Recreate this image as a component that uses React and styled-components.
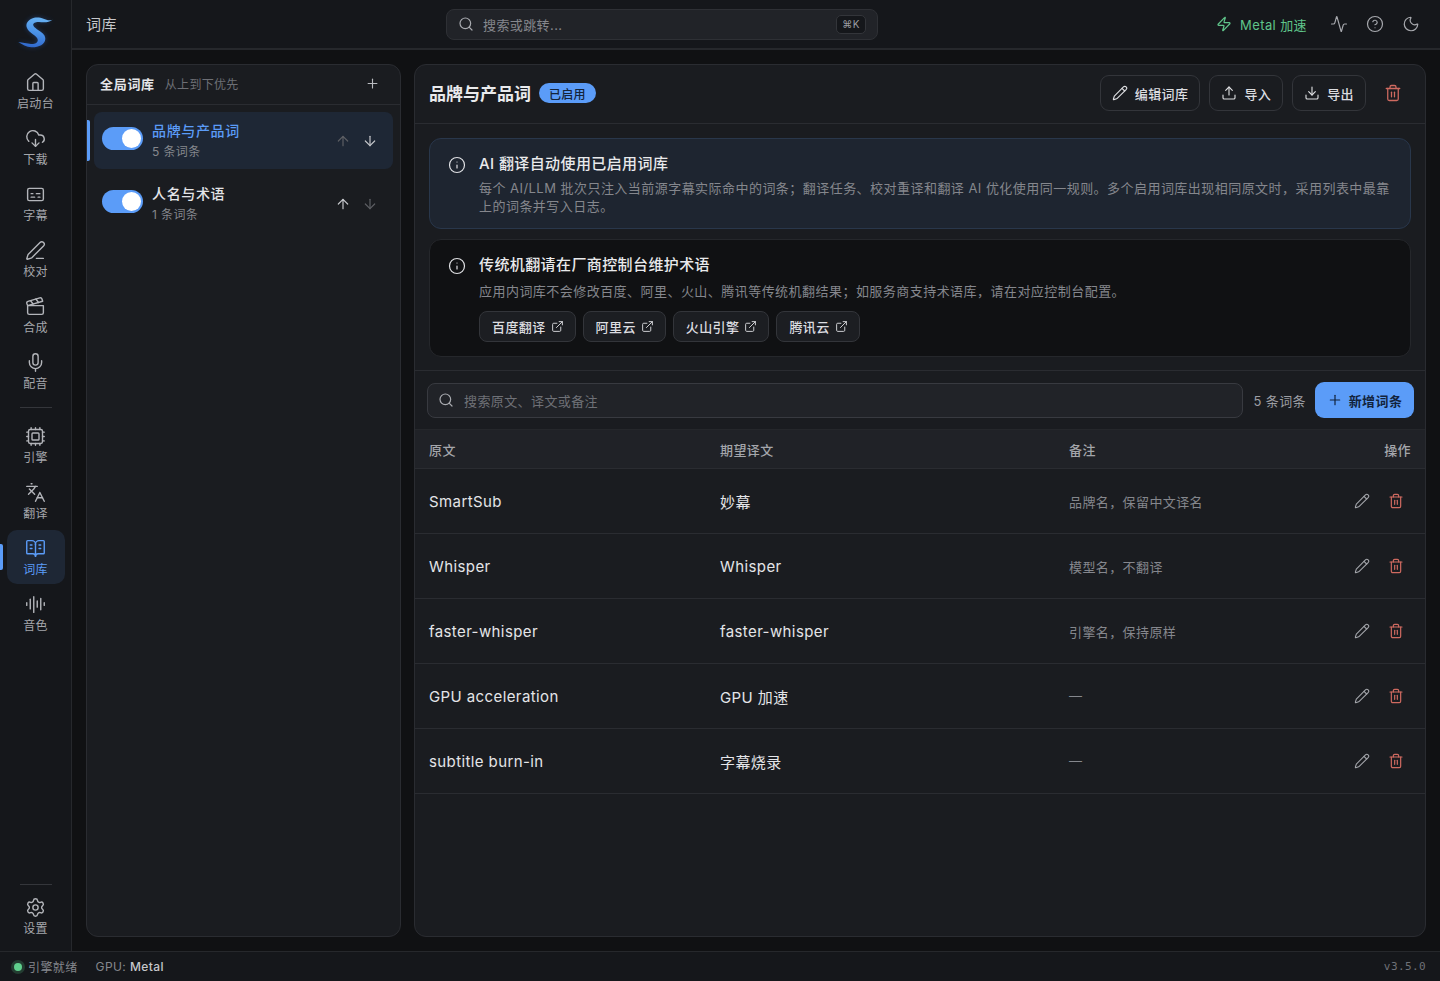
import React from "react";
import styled, { createGlobalStyle } from "styled-components";
import {
  House, CloudDownload, Captions, PenLine, Clapperboard, Mic, Cpu, Languages,
  BookOpenText, AudioLines, Settings, Zap, Activity, CircleHelp, Moon, Search,
  Plus, ArrowUp, ArrowDown, Pencil, Upload, Download, Trash2, Info, ExternalLink,
} from "lucide-react";

const NAV_TOP = [
  { label: "启动台", Icon: House },
  { label: "下载", Icon: CloudDownload },
  { label: "字幕", Icon: Captions },
  { label: "校对", Icon: PenLine },
  { label: "合成", Icon: Clapperboard },
  { label: "配音", Icon: Mic },
];
const NAV_MID = [
  { label: "引擎", Icon: Cpu },
  { label: "翻译", Icon: Languages },
  { label: "词库", Icon: BookOpenText, active: true },
  { label: "音色", Icon: AudioLines },
];
const LIBS = [
  { name: "品牌与产品词", count: "5 条词条", active: true, upOff: true },
  { name: "人名与术语", count: "1 条词条", downOff: true },
];
const TERMS = [
  ["SmartSub", "妙幕", "品牌名，保留中文译名"],
  ["Whisper", "Whisper", "模型名，不翻译"],
  ["faster-whisper", "faster-whisper", "引擎名，保持原样"],
  ["GPU acceleration", "GPU 加速", "—"],
  ["subtitle burn-in", "字幕烧录", "—"],
];
const VENDORS = ["百度翻译", "阿里云", "火山引擎", "腾讯云"];

const GlobalStyle = createGlobalStyle`
  html, body { margin: 0; padding: 0; background: #101113; }
  body {
    font-family: Inter, "Noto Sans CJK SC", sans-serif;
    letter-spacing: 0.4px;
    color: #e4e5e8;
    -webkit-font-smoothing: antialiased;
  }
  button { letter-spacing: inherit; }
  * { box-sizing: border-box; }
`;

const Shell = styled.div`
  width: 1440px;
  height: 981px;
  display: flex;
  flex-direction: column;
  overflow: hidden;
`;
const Body = styled.div`
  flex: 1;
  display: flex;
  min-height: 0;
`;

const Sidebar = styled.aside`
  width: 72px;
  flex: none;
  display: flex;
  flex-direction: column;
  align-items: center;
  background: #15171b;
  border-right: 1px solid #26282c;
`;
const LogoWrap = styled.div`
  height: 64px;
  width: 100%;
  flex: none;
  display: flex;
  align-items: flex-start;
  justify-content: center;
  padding-top: 15px;
`;
const NavGroup = styled.div`
  display: flex;
  flex-direction: column;
  gap: 2px;
`;
const NavItem = styled.div`
  position: relative;
  width: 58px;
  height: 54px;
  display: flex;
  flex-direction: column;
  align-items: center;
  justify-content: flex-start;
  padding-top: 8px;
  gap: 2px;
  border-radius: 10px;
  font-size: 12px;
  letter-spacing: 0.3px;
  line-height: 17px;
  color: ${(p) => (p.$active ? "#5b9cf8" : "#a4a6ab")};
  background: ${(p) => (p.$active ? "#1e2735" : "transparent")};

  svg { color: ${(p) => (p.$active ? "#5b9cf8" : "#b3b5ba")}; }
`;
const NavMarker = styled.span`
  position: absolute;
  left: -7px;
  top: 14px;
  width: 3px;
  height: 26px;
  border-radius: 0 2px 2px 0;
  background: #5b9cf8;
`;
const NavDivider = styled.div`
  width: 32px;
  height: 1px;
  margin: 9px 0 ${(p) => (p.$tight ? "4px" : "10px")};
  background: #34363b;
`;
const SidebarFoot = styled.div`
  margin-top: auto;
  padding-bottom: 8px;
  display: flex;
  flex-direction: column;
  align-items: center;
`;

const Main = styled.div`
  flex: 1;
  min-width: 0;
  display: flex;
  flex-direction: column;
`;
const Topbar = styled.header`
  height: 50px;
  flex: none;
  display: flex;
  align-items: center;
  padding: 0 20px 0 14px;
  background: #15171b;
  border-bottom: 2px solid #26282c;
`;
const PageTitle = styled.div`
  width: 360px;
  margin-top: -2px;
  font-size: 15px;
  color: #c6c7cb;
`;
const GlobalSearch = styled.div`
  width: 432px;
  height: 31px;
  display: flex;
  align-items: center;
  gap: 9px;
  padding: 0 11px;
  border-radius: 8px;
  border: 1px solid #2e3035;
  background: #212328;
  font-size: 13px;
  color: #85878d;
  svg { color: #a9abb0; }
`;
const Kbd = styled.span`
  margin-left: auto;
  width: 30px;
  height: 19px;
  display: flex;
  align-items: center;
  justify-content: center;
  border-radius: 5px;
  border: 1px solid #33353a;
  background: #15171b;
  font-size: 10px;
  color: #9b9da2;
`;
const TopActions = styled.div`
  margin-left: auto;
  display: flex;
  align-items: center;
  color: #a7a9ae;
`;
const MetalTag = styled.div`
  display: flex;
  align-items: center;
  gap: 8px;
  margin-right: 23px;
  font-size: 13px;
  color: #5fc48a;
`;
const TopIcon = styled.span`
  width: 18px;
  height: 18px;
  display: flex;
  margin-left: ${(p) => (p.$first ? "0" : "18px")};
`;

const Content = styled.main`
  flex: 1;
  min-height: 0;
  display: flex;
  gap: 13px;
  padding: 14px;
`;
const Panel = styled.section`
  display: flex;
  flex-direction: column;
  border: 1px solid #2a2c31;
  border-radius: 12px;
  background: #1a1c20;
  overflow: hidden;
`;
const LibraryPanel = styled(Panel)`
  width: 315px;
  flex: none;
`;
const DetailPanel = styled(Panel)`
  flex: 1;
  min-width: 0;
`;

const LibHead = styled.div`
  height: 40px;
  flex: none;
  display: flex;
  align-items: center;
  gap: 10px;
  padding: 0 20px 2px 13px;
  border-bottom: 1px solid #2a2c31;
`;
const LibHeadTitle = styled.span`
  font-size: 13px;
  letter-spacing: 0.7px;
  font-weight: 600;
  color: #e4e5e8;
`;
const LibHeadNote = styled.span`
  font-size: 12px;
  letter-spacing: 0.3px;
  color: #6d6f75;
`;
const LibHeadAdd = styled.span`
  margin-left: auto;
  display: flex;
  color: #b9bbc0;
`;
const LibList = styled.div`
  display: flex;
  flex-direction: column;
  gap: 6px;
  padding: 7px;
`;
const LibRow = styled.div`
  position: relative;
  height: 57px;
  display: flex;
  align-items: center;
  padding: 0 15px 0 8px;
  border-radius: 8px;
  background: ${(p) => (p.$active ? "#1e2735" : "transparent")};
`;
const LibMarker = styled.span`
  position: absolute;
  left: -7px;
  top: 8px;
  width: 3px;
  height: 41px;
  border-radius: 0 2px 2px 0;
  background: #5b9cf8;
`;
const Toggle = styled.span`
  position: relative;
  width: 41px;
  height: 23px;
  flex: none;
  border-radius: 12px;
  background: #5b9cf8;
  margin-top: -4px;

  &::after {
    content: "";
    position: absolute;
    right: 2px;
    top: 2px;
    width: 19px;
    height: 19px;
    border-radius: 50%;
    background: #fff;
  }
`;
const LibText = styled.div`
  margin-left: 9px;
  flex: 1;
  min-width: 0;
`;
const LibName = styled.div`
  font-size: 14px;
  letter-spacing: 0.65px;
  line-height: 20px;
  font-weight: 500;
  color: ${(p) => (p.$active ? "#5b9cf8" : "#e4e5e8")};
`;
const LibCount = styled.div`
  font-size: 12px;
  line-height: 18px;
  margin-top: 2px;
  color: #85878d;
`;
const Arrow = styled.span`
  display: flex;
  margin-left: 11px;
  color: ${(p) => (p.$off ? "#5c5e63" : "#c3c5c9")};
`;

const DetailHead = styled.div`
  height: 59px;
  flex: none;
  display: flex;
  align-items: center;
  padding: 0 23px 2px 14px;
  border-bottom: 1px solid #2a2c31;
`;
const DetailTitle = styled.h1`
  margin: -1px 0 0;
  font-size: 17px;
  letter-spacing: 0;
  font-weight: 600;
  color: #e9eaec;
`;
const EnabledBadge = styled.span`
  margin-left: 8px;
  height: 20px;
  padding: 0 10px;
  display: flex;
  align-items: center;
  border-radius: 10px;
  background: #5b9cf8;
  font-size: 12px;
  letter-spacing: 0.3px;
  font-weight: 500;
  color: #14233a;
`;
const HeadActions = styled.div`
  margin-left: auto;
  display: flex;
  align-items: center;
  gap: 9px;
`;
const OutlineButton = styled.button`
  height: 36px;
  padding: 0 11px;
  display: flex;
  align-items: center;
  gap: 7px;
  border-radius: 9px;
  border: 1px solid #33353a;
  background: #1a1c20;
  color: #dcdde0;
  font: 500 13px Inter, "Noto Sans CJK SC", sans-serif;
`;
const DangerIcon = styled.span`
  display: flex;
  color: #cf6a60;
  margin-left: ${(p) => p.$gap || 0}px;
`;

const Notices = styled.div`
  flex: none;
  display: flex;
  flex-direction: column;
  gap: 10px;
  padding: 14px 14px 13px;
  border-bottom: 1px solid #2a2c31;
`;
const Notice = styled.div`
  display: flex;
  gap: 13px;
  padding: 14px 18px ${(p) => (p.$tone === "blue" ? "13px" : "14px")} 18px;
  border-radius: 12px;
  border: 1px solid ${(p) => (p.$tone === "blue" ? "#29374b" : "#25272b")};
  background: ${(p) => (p.$tone === "blue" ? "#1e2530" : "#101113")};
  svg { flex: none; }
`;
const NoticeIcon = styled.span`
  display: flex;
  margin-top: 3px;
  color: #dfe0e3;
`;
const NoticeBody = styled.div`
  flex: 1;
  min-width: 0;
`;
const NoticeTitle = styled.div`
  font-size: 15px;
  line-height: 22px;
  font-weight: 500;
  color: #e9eaec;
`;
const NoticeText = styled.div`
  margin-top: ${(p) => (p.$loose ? "6px" : "4px")};
  font-size: 13px;
  line-height: 18px;
  letter-spacing: 0.46px;
  color: #85878d;
`;
const VendorRow = styled.div`
  display: flex;
  gap: 7px;
  margin-top: 11px;
`;
const VendorButton = styled.button`
  height: 31px;
  padding: 0 11px 0 12px;
  display: flex;
  align-items: center;
  gap: 5px;
  border-radius: 8px;
  border: 1px solid #33353a;
  background: #1c1e22;
  color: #dcdde0;
  font: 500 13px Inter, "Noto Sans CJK SC", sans-serif;
`;

const TermBar = styled.div`
  flex: none;
  height: 58px;
  display: flex;
  align-items: center;
  padding: 0 11px 0 12px;
`;
const TermSearch = styled.div`
  flex: 1;
  height: 35px;
  display: flex;
  align-items: center;
  gap: 10px;
  padding: 0 10px;
  border-radius: 8px;
  border: 1px solid #383a40;
  background: #212328;
  font-size: 13px;
  color: #6f7177;
  svg { color: #a9abb0; }
`;
const TermCount = styled.span`
  margin: 0 9px 0 10px;
  font-size: 13px;
  color: #9c9ea3;
`;
const PrimaryButton = styled.button`
  width: 99px;
  height: 36px;
  display: flex;
  align-items: center;
  justify-content: center;
  gap: 6px;
  border: 0;
  border-radius: 9px;
  background: #5b9cf8;
  color: #12233c;
  font: 600 13px Inter, "Noto Sans CJK SC", sans-serif;
`;

const row = `
  display: grid;
  grid-template-columns: 291px 349px 1fr 84px;
  align-items: center;
  padding-left: 14px;
`;
const TableHead = styled.div`
  ${row}
  flex: none;
  height: 40px;
  background: #202227;
  border-top: 1px solid #25272b;
  border-bottom: 1px solid #2a2c31;
  font-size: 13px;
  font-weight: 500;
  color: #a4a6ab;
`;
const HeadActionsCell = styled.div`
  text-align: right;
  padding-right: 14px;
`;
const TermRow = styled.div`
  ${row}
  flex: none;
  height: 65px;
  border-bottom: 1px solid #2a2c31;
`;
const Source = styled.div`
  font-size: 15px;
  color: #e4e5e8;
`;
const Note = styled.div`
  font-size: 13px;
  color: #85878d;
`;
const RowActions = styled.div`
  display: flex;
  justify-content: flex-end;
  align-items: center;
  gap: 18px;
  padding-right: 21px;
`;
const EditIcon = styled.span`
  display: flex;
  color: #a4a6ab;
`;

const StatusBar = styled.footer`
  height: 30px;
  flex: none;
  display: flex;
  align-items: center;
  padding: 0 14px;
  background: #15171b;
  border-top: 1px solid #26282c;
  font-size: 12px;
  color: #85878d;
`;
const Dot = styled.span`
  width: 8px;
  height: 8px;
  margin-right: 6px;
  border-radius: 50%;
  background: #5fd08d;
  box-shadow: 0 0 0 3px rgba(95, 208, 141, 0.2);
`;
const Gpu = styled.span`
  margin-left: 18px;
  strong { font-weight: 500; color: #c6c7cb; }
`;
const Version = styled.span`
  margin-left: auto;
  font-family: "DejaVu Sans Mono", "Liberation Mono", monospace;
  font-size: 11px;
  color: #6f7177;
`;

const LOGO_PATH =
  "M34.5 4.8C31 6 28.5 5 25.5 3.8C22 2.4 17 2 13.5 3.8C9.5 5.8 7.8 9 8.7 12.2C9.5 15 12 17.2 14.5 19C17.5 21.2 19.8 22.8 19.8 25C19.8 27.8 16.8 29.3 13 29C9 28.7 4.5 27.3 .3 27C4 29.5 8.5 32.2 13.5 32.3C20.5 32.5 27 29.5 27.3 24C27.5 20.5 25 18.5 22.3 16.5C19.5 14.5 15.5 12.3 15.2 10C15 7.8 18 6.8 21 7C25.5 7.3 30.5 8 34.5 4.8Z";

const Logo = () => (
  <svg width="36" height="34" viewBox="0 0 36 34" aria-label="SmartSub" overflow="visible">
    <defs>
      <linearGradient id="logo" x1="0.6" y1="0" x2="0.4" y2="1">
        <stop offset="0" stopColor="#68b2f2" />
        <stop offset="0.5" stopColor="#4a92e8" />
        <stop offset="1" stopColor="#3068cc" />
      </linearGradient>
      <filter id="glow" x="-40%" y="-40%" width="180%" height="180%">
        <feGaussianBlur stdDeviation="2.6" />
      </filter>
    </defs>
    <path filter="url(#glow)" opacity="0.4" fill="#2c66c8" d={LOGO_PATH} />
    <path fill="url(#logo)" d={LOGO_PATH} />
  </svg>
);

const Nav = ({ label, Icon, active }) => (
  <NavItem $active={active}>
    {active && <NavMarker />}
    <Icon size={21} strokeWidth={1.6} />
    <span>{label}</span>
  </NavItem>
);

export default function App() {
  return (
    <Shell>
      <GlobalStyle />
      <Body>
        <Sidebar>
          <LogoWrap><Logo /></LogoWrap>
          <NavGroup>{NAV_TOP.map((n) => <Nav key={n.label} {...n} />)}</NavGroup>
          <NavDivider />
          <NavGroup>{NAV_MID.map((n) => <Nav key={n.label} {...n} />)}</NavGroup>
          <SidebarFoot>
            <NavDivider $tight />
            <Nav label="设置" Icon={Settings} />
          </SidebarFoot>
        </Sidebar>
        <Main>
          <Topbar>
            <PageTitle>词库</PageTitle>
            <GlobalSearch>
              <Search size={16} strokeWidth={1.8} />
              <span>搜索或跳转...</span>
              <Kbd>⌘K</Kbd>
            </GlobalSearch>
            <TopActions>
              <MetalTag>
                <Zap size={16} strokeWidth={1.8} />
                <span>Metal 加速</span>
              </MetalTag>
              <TopIcon $first><Activity size={18} strokeWidth={1.6} /></TopIcon>
              <TopIcon><CircleHelp size={18} strokeWidth={1.6} /></TopIcon>
              <TopIcon><Moon size={18} strokeWidth={1.6} /></TopIcon>
            </TopActions>
          </Topbar>
          <Content>
            <LibraryPanel>
              <LibHead>
                <LibHeadTitle>全局词库</LibHeadTitle>
                <LibHeadNote>从上到下优先</LibHeadNote>
                <LibHeadAdd><Plus size={15} strokeWidth={1.8} /></LibHeadAdd>
              </LibHead>
              <LibList>
                {LIBS.map((l) => (
                  <LibRow key={l.name} $active={l.active}>
                    {l.active && <LibMarker />}
                    <Toggle />
                    <LibText>
                      <LibName $active={l.active}>{l.name}</LibName>
                      <LibCount>{l.count}</LibCount>
                    </LibText>
                    <Arrow $off={l.upOff}><ArrowUp size={16} strokeWidth={1.8} /></Arrow>
                    <Arrow $off={l.downOff}><ArrowDown size={16} strokeWidth={1.8} /></Arrow>
                  </LibRow>
                ))}
              </LibList>
            </LibraryPanel>
            <DetailPanel>
              <DetailHead>
                <DetailTitle>品牌与产品词</DetailTitle>
                <EnabledBadge>已启用</EnabledBadge>
                <HeadActions>
                  <OutlineButton><Pencil size={16} strokeWidth={1.7} />编辑词库</OutlineButton>
                  <OutlineButton><Upload size={16} strokeWidth={1.7} />导入</OutlineButton>
                  <OutlineButton><Download size={16} strokeWidth={1.7} />导出</OutlineButton>
                  <DangerIcon $gap={9}><Trash2 size={18} strokeWidth={1.7} /></DangerIcon>
                </HeadActions>
              </DetailHead>
              <Notices>
                <Notice $tone="blue">
                  <NoticeIcon><Info size={18} strokeWidth={1.6} /></NoticeIcon>
                  <NoticeBody>
                    <NoticeTitle>AI 翻译自动使用已启用词库</NoticeTitle>
                    <NoticeText>每个 AI/LLM 批次只注入当前源字幕实际命中的词条；翻译任务、校对重译和翻译 AI 优化使用同一规则。多个启用词库出现相同原文时，采用列表中最靠上的词条并写入日志。</NoticeText>
                  </NoticeBody>
                </Notice>
                <Notice>
                  <NoticeIcon><Info size={18} strokeWidth={1.6} /></NoticeIcon>
                  <NoticeBody>
                    <NoticeTitle>传统机翻请在厂商控制台维护术语</NoticeTitle>
                    <NoticeText $loose>应用内词库不会修改百度、阿里、火山、腾讯等传统机翻结果；如服务商支持术语库，请在对应控制台配置。</NoticeText>
                    <VendorRow>
                      {VENDORS.map((v) => (
                        <VendorButton key={v}>{v}<ExternalLink size={13} strokeWidth={1.7} /></VendorButton>
                      ))}
                    </VendorRow>
                  </NoticeBody>
                </Notice>
              </Notices>
              <TermBar>
                <TermSearch>
                  <Search size={16} strokeWidth={1.8} />
                  <span>搜索原文、译文或备注</span>
                </TermSearch>
                <TermCount>5 条词条</TermCount>
                <PrimaryButton><Plus size={16} strokeWidth={1.8} />新增词条</PrimaryButton>
              </TermBar>
              <TableHead>
                <div>原文</div>
                <div>期望译文</div>
                <div>备注</div>
                <HeadActionsCell>操作</HeadActionsCell>
              </TableHead>
              {TERMS.map(([src, target, note]) => (
                <TermRow key={src}>
                  <Source>{src}</Source>
                  <Source>{target}</Source>
                  <Note>{note}</Note>
                  <RowActions>
                    <EditIcon><Pencil size={16} strokeWidth={1.6} /></EditIcon>
                    <DangerIcon><Trash2 size={16} strokeWidth={1.8} /></DangerIcon>
                  </RowActions>
                </TermRow>
              ))}
            </DetailPanel>
          </Content>
        </Main>
      </Body>
      <StatusBar>
        <Dot />
        <span>引擎就绪</span>
        <Gpu>GPU: <strong>Metal</strong></Gpu>
        <Version>v3.5.0</Version>
      </StatusBar>
    </Shell>
  );
}
